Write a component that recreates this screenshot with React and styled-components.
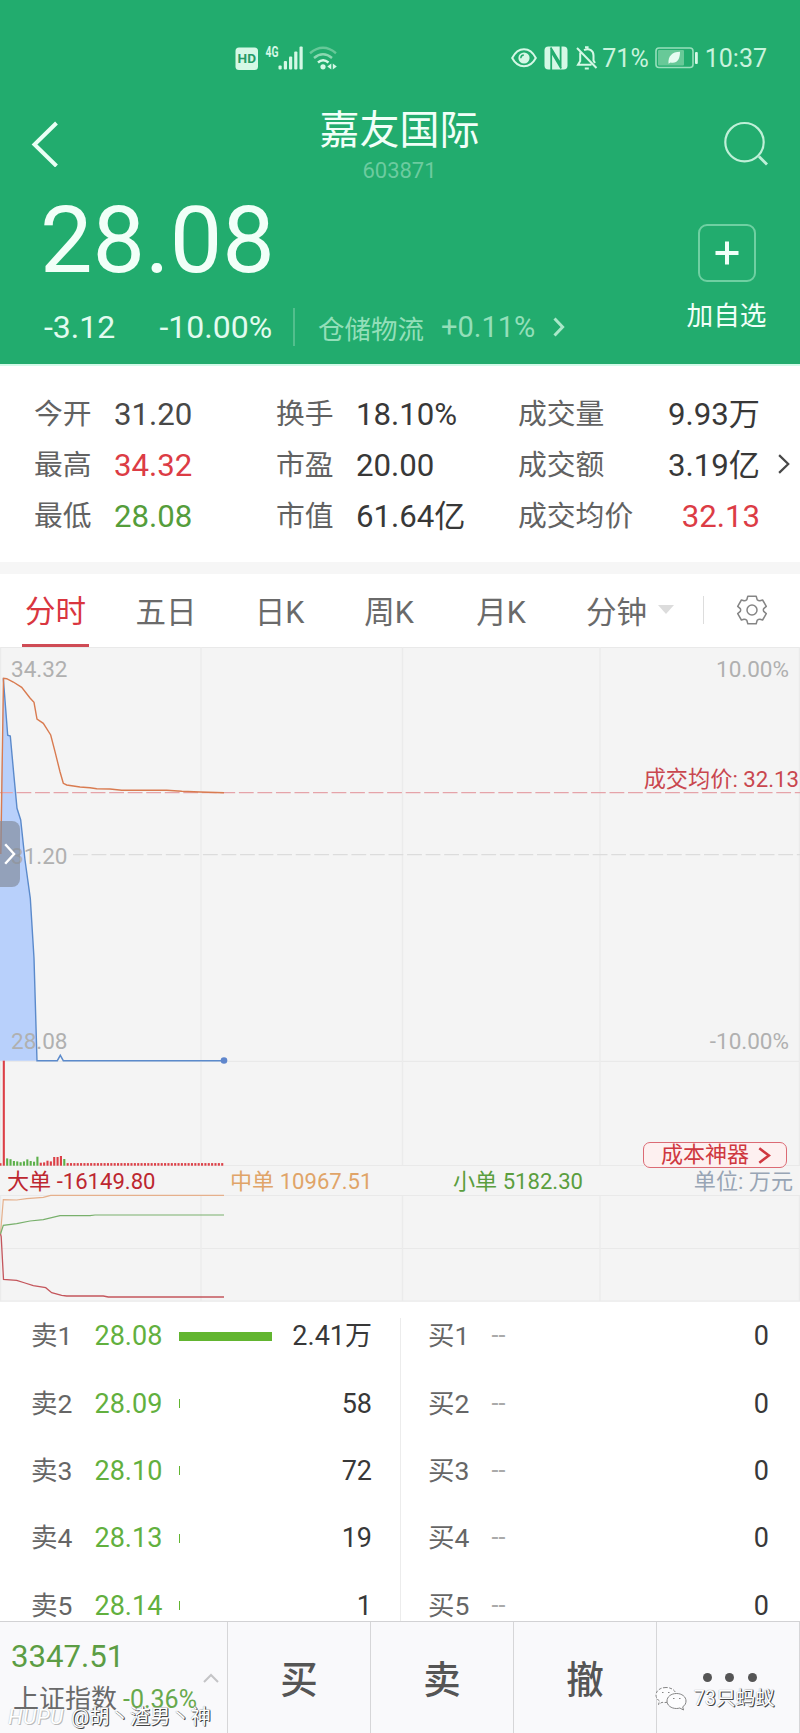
import React from 'react'
import styled, { createGlobalStyle } from 'styled-components'

const GlobalStyle = createGlobalStyle`
  * {
    box-sizing: border-box;
  }
  body {
    margin: 0;
    background-color: #fff;
    font-family: Roboto, "Noto Sans CJK SC", sans-serif;
  }
  svg {
    display: block;
    flex: none;
  }
`

const Page = styled.div`
  width: 800px;
  height: 1733px;
  overflow: hidden;
  display: flex;
  flex-direction: column;
`

/* header */

const Header = styled.header`
  flex: none;
  height: 366px;
  background-color: #22ac6e;
  border-bottom: 2px solid #d3fbe9;
  color: #f1fff8;
`
const StatusBar = styled.div`
  display: flex;
  align-items: center;
  height: 78px;
  padding: 38px 33px 0 235px;
  color: #c9f3dd;
`
const StatusText = styled.span`
  font-size: 25px;
  line-height: 40px;
  margin-left: ${props => props.gap}px;
`
const StatusLabel = styled(StatusText)`
  padding-top: 2px;
`
const StatusRight = styled.div`
  display: flex;
  align-items: center;
  margin-left: auto;
`
const Nav = styled.div`
  display: flex;
  justify-content: space-between;
  height: 110px;
  padding: 27px 32px 0 31px;
`
const NavIcon = styled.div`
  width: 46px;
  padding-top: 16px;
`
const TitleBox = styled.div`
  padding-top: 2px;
  text-align: center;
`
const Title = styled.h1`
  margin: 0;
  font-size: 40px;
  font-weight: normal;
  line-height: 48px;
`
const Code = styled.p`
  margin: 3px 0 0;
  font-size: 22px;
  line-height: 26px;
  color: #6ccb9f;
`
const Quote = styled.div`
  display: flex;
  justify-content: space-between;
  padding: 0 33px 0 40px;
`
const Price = styled.p`
  margin: 2px 0 0;
  font-size: 93.5px;
  line-height: 101px;
`
const ChangeRow = styled.div`
  display: flex;
  align-items: center;
  height: 38px;
  margin-top: 17px;
  padding-left: 4px;
  font-size: 32px;
  color: #e2fbef;
`
const Change = styled.span`
  width: ${props => props.w}px;
`
const Sector = styled.div`
  display: flex;
  align-items: center;
  height: 38px;
  padding-left: 23px;
  border-left: 2px solid #52bf8d;
  font-size: 26.5px;
  color: #93dfb9;
`
const SectorChange = styled.span`
  font-size: 29px;
  margin: 0 18px 0 17px;
`
const Favorite = styled.div`
  display: flex;
  flex-direction: column;
  align-items: center;
  padding: 36px 0 0;
  width: 81px;
  font-size: 26.7px;
  line-height: 32px;
`
const PlusButton = styled.button`
  display: flex;
  align-items: center;
  justify-content: center;
  width: 58px;
  height: 58px;
  margin: 0 0 18px;
  padding: 0;
  border: 2px solid #6fd0a2;
  border-radius: 9px;
  background: none;
`

/* stats */

const Stats = styled.section`
  flex: none;
  display: grid;
  grid-template-columns: 242px 242px 242px 30px;
  grid-template-rows: repeat(3, 51px);
  height: 196px;
  padding: 23px 0 0 34px;
`
const Stat = styled.div`
  display: flex;
  align-items: center;
  justify-content: ${props => (props.spread ? 'space-between' : 'flex-start')};
  line-height: 51px;
`
const StatLabel = styled.span`
  font-size: 28.8px;
  width: ${props => (props.wide ? 'auto' : '80px')};
  color: #626262;
`
const StatValue = styled.span`
  font-size: 31.2px;
  color: ${props => props.color || '#383838'};
`
const StatMore = styled.div`
  grid-column: 4;
  grid-row: 2;
  display: flex;
  align-items: center;
  padding: 0 0 3px 18px;
`

/* tabs */

const Tabs = styled.nav`
  flex: none;
  display: grid;
  grid-template-columns: 111px 110px 117px 102px 122px 141px 1fr;
  height: 85px;
  border-top: 12px solid #f6f6f6;
`
const Tab = styled.div`
  display: flex;
  align-items: center;
  justify-content: center;
  padding-bottom: 2px;
  font-size: 30.5px;
  color: #6a6a6a;
`
const ActiveTab = styled(Tab)`
  width: 67px;
  margin-left: 22px;
  padding-bottom: 0;
  border-bottom: 3px solid #cf4b55;
  color: #d9363f;
`
const MenuTab = styled(Tab)`
  justify-content: space-between;
  padding-left: 24px;
  padding-right: 29px;
`
const Caret = styled.i`
  border: 8.5px solid transparent;
  border-top: 9px solid #dcdcdc;
  border-bottom: 0;
`
const Settings = styled.div`
  display: flex;
  align-items: center;
  height: 28px;
  margin-top: 22px;
  padding-left: 32px;
  border-left: 1px solid #ddd;
`

/* chart */

const Chart = styled.section`
  flex: none;
  position: relative;
  height: 655px;
  background-color: #f4f4f4;
`
const AxisLabel = styled.span`
  position: absolute;
  top: ${props => props.y}px;
  ${props => (props.right ? 'right: 11px;' : 'left: 11px;')}
  font-size: 22.5px;
  line-height: 26px;
  color: #b0b0b0;
`
const AverageLabel = styled(AxisLabel)`
  right: 1px;
  font-size: 22.2px;
  color: #c9474f;
`
const Drawer = styled.div`
  position: absolute;
  left: 0;
  top: 174px;
  display: flex;
  align-items: center;
  width: 20px;
  height: 66px;
  padding-left: 4px;
  border-radius: 0 8px 8px 0;
  background-color: rgba(130, 138, 155, 0.68);
`
const CostButton = styled.div`
  position: absolute;
  left: 643px;
  top: 495px;
  display: flex;
  align-items: center;
  width: 144px;
  height: 26px;
  padding-left: 17px;
  gap: 9px;
  border: 1px solid #dc6a74;
  border-radius: 7px;
  background-color: #fdf0f0;
  font-size: 22px;
  line-height: 26px;
  color: #cf3840;
`
const FlowLegend = styled.div`
  position: absolute;
  left: 0;
  right: 0;
  top: 519px;
  display: grid;
  grid-template-columns: 223px 223px 1fr auto;
  padding: 0 7px;
  font-size: 22.1px;
  line-height: 30px;
`
const Flow = styled.span`
  color: ${props => props.color};
`

/* order book */

const Book = styled.section`
  flex: none;
  display: grid;
  grid-template-columns: 400px 400px;
  height: 319px;
`
const Side = styled.div`
  height: 319px;
  & + & {
    background: linear-gradient(#ececec, #ececec) 0 16px / 1px 303px no-repeat;
    padding-left: 1px;
  }
`
const Level = styled.div`
  display: flex;
  align-items: center;
  height: 67.4px;
  padding: 1px ${props => (props.buy ? 31 : 28)}px 0 ${props => (props.buy ? 27 : 31)}px;
  font-size: 27px;
  line-height: 32px;
  color: #383838;
`
const LevelName = styled.span`
  width: 63.5px;
  font-size: 26.5px;
  color: #666;
`
const LevelPrice = styled.span`
  width: 84.5px;
  color: ${props => (props.empty ? '#aaa' : '#62b03e')};
  font-size: ${props => (props.empty ? 25 : 27)}px;
`
const LevelBar = styled.i`
  height: 9px;
  background-color: #62b530;
`
const LevelAmount = styled.span`
  margin-left: auto;
  font-size: 27px;
`

/* bottom bar */

const BottomBar = styled.footer`
  position: relative;
  flex: none;
  display: grid;
  grid-template-columns: 228px 143px 143px 143px 1fr;
  height: 112px;
  border-top: 1px solid #d2d2d4;
  background-color: #f9f9fb;
`
const IndexBox = styled.div`
  display: flex;
  align-items: flex-start;
  justify-content: space-between;
  padding: 14px 8px 0 11px;
  border-right: 1px solid #d6d6d8;
  svg {
    margin: 37px 0 0 -20px;
  }
`
const IndexValue = styled.p`
  margin: 0;
  font-size: 31.2px;
  line-height: 42px;
  color: #5c9d44;
`
const IndexName = styled.p`
  margin: 0;
  padding-left: 2px;
  font-size: 26px;
  line-height: 42px;
  color: #6a6a6a;
  white-space: nowrap;
`
const IndexChange = styled.span`
  margin-left: 6px;
  font-size: 25px;
  color: #68a94c;
`
const Action = styled.div`
  display: flex;
  align-items: center;
  justify-content: center;
  padding-bottom: 3px;
  border-right: 1px solid #d6d6d8;
  font-size: 37.5px;
  font-weight: 500;
  color: #555;
  &:last-of-type {
    border-right: 0;
  }
`
const Dots = styled.div`
  display: flex;
  gap: 13.5px;
  margin: 0 0 -2px 3px;
`
const Dot = styled.i`
  width: 9px;
  height: 9px;
  border-radius: 50%;
  background-color: #555;
`
const Watermark = styled.div`
  position: absolute;
  left: ${props => props.x}px;
  top: ${props => props.y}px;
  display: flex;
  align-items: center;
  font-size: ${props => props.size}px;
  line-height: 24px;
  white-space: nowrap;
  color: #fff;
  text-shadow: 1px 1px 0 #444, 1px 0 0 #777, 0 0 1px #888;
`
const Brand = styled.em`
  width: 63px;
  font-size: 21px;
  letter-spacing: 0.5px;
  text-shadow: 1px 1px 0 #bbb, 0 0 1px #aaa;
`

const UP = '#dc3c45'
const DOWN = '#559d3b'

const stats = [
  ['今开', '31.20', '#484848'],
  ['换手', '18.10%'],
  ['成交量', '9.93万'],
  ['最高', '34.32', UP],
  ['市盈', '20.00'],
  ['成交额', '3.19亿'],
  ['最低', '28.08', DOWN],
  ['市值', '61.64亿'],
  ['成交均价', '32.13', UP],
]

const sells = [
  ['卖1', '28.08', '2.41万', 93],
  ['卖2', '28.09', '58', 1],
  ['卖3', '28.10', '72', 1],
  ['卖4', '28.13', '19', 1],
  ['卖5', '28.14', '1', 1],
]
const buys = ['买1', '买2', '买3', '买4', '买5']

// first minutes of volume: [height, is up], everything later is flat
const volumes = [
  [2.5, 1], [105, 1], [7.3, 0], [6.5, 0], [4.7, 0], [4.3, 0], [3.5, 0],
  [4.3, 0], [6.3, 0], [4.7, 0], [4, 0], [9, 0], [3, 1], [3.3, 1], [5, 1],
  [4.3, 1], [8.7, 1], [8.7, 1], [9.7, 1], [6.7, 0],
]
for (let i = volumes.length; i < 67; i++) {
  volumes.push([2.6, 1])
}

const priceLine = '3.3,31.3 7.7,88.3 10.3,89 13.7,126.3 17,161.3 20.7,173 25,213 30.3,251.3 34,311.3 37,413.7'
const averageLine = '0.8,207 3.5,31.3 6.7,31.7 13.3,35 21.7,40.3 30,51 34,55.3 37,72 43.3,76.3 50.7,88 55,104.7 60,124.7 63.3,136.3 66.7,138 80,140 90,140.7 96.7,141.7 110,142 121.7,143.3 166.7,143.3 181.7,144.3 200,145 224,145.7'

const Arrow = ({ w, h, stroke, color = 'currentColor' }) => (
  <svg width={w} height={h} fill="none" stroke={color} strokeWidth={stroke}>
    <path d={`M${stroke / 2} ${stroke / 2}L${w - stroke * 0.8} ${h / 2}L${stroke / 2} ${h - stroke / 2}`} />
  </svg>
)

const SignalIcons = () => (
  <svg width="104" height="26" viewBox="0 0 104 26">
    <rect x="0.5" y="2.5" width="22.5" height="22.5" rx="3.5" fill="#d5f8e6" />
    <text x="2.6" y="18.4" fontSize="13.5" fontWeight="bold" fill="#249b66" textLength="18.4" lengthAdjust="spacingAndGlyphs">HD</text>
    <text x="30.5" y="12" fontSize="14.5" fontWeight="bold" fill="#d5f8e6" textLength="13" lengthAdjust="spacingAndGlyphs">4G</text>
    <g fill="#d5f8e6">
      <rect x="43.5" y="20.5" width="3.2" height="4" rx="1" />
      <rect x="48.8" y="16" width="3.2" height="8.5" rx="1" />
      <rect x="54" y="11.5" width="3.2" height="13" rx="1" />
      <rect x="59.2" y="6.5" width="3.2" height="18" rx="1" />
      <rect x="64.5" y="1.5" width="3.2" height="23" rx="1" />
    </g>
    <g fill="none" strokeWidth="2.4">
      <path d="M75 8.2Q88 -2.5 101 8.2" stroke="#66c898" />
      <path d="M79 13Q88 5.5 97 13" stroke="#8bd8b1" />
      <path d="M83 17.5Q88 13 93.5 17.5" stroke="#d5f8e6" />
    </g>
    <circle cx="88" cy="21.8" r="2.6" fill="#d5f8e6" />
    <path d="M96.3 18.5v6l-4-3zM97.8 18.5v6l4-3z" fill="#d5f8e6" />
  </svg>
)

const EyeIcon = () => (
  <svg width="26" height="22" viewBox="0 0 26 22" fill="none" stroke="#d5f8e6" strokeWidth="2">
    <path d="M1.2 11C7-0.7 19-0.7 24.8 11C19 22 7 22 1.2 11z" />
    <circle cx="13" cy="11" r="5.6" fill="#d5f8e6" stroke="none" />
    <path d="M9.8 11.2a3.2 3.2 0 0 1 3-3.2" stroke="#22ac6e" strokeWidth="1.4" />
  </svg>
)

const NfcIcon = () => (
  <svg width="24" height="24" viewBox="0 0 24 24" fill="none">
    <rect x="0.5" y="0.5" width="23" height="23" rx="4" fill="#d5f8e6" />
    <path d="M7.2 24V5.5L17.2 22.5M16.6 0V18L6.6 1.5" stroke="#22ac6e" strokeWidth="1.8" />
  </svg>
)

const BellOffIcon = () => (
  <svg width="22" height="24" viewBox="0 0 22 24" fill="none" stroke="#d5f8e6" strokeWidth="2">
    <path d="M4.2 6.5V15L2 18.8H15.5M8 4.2C13.5 1.6 17.5 5 17.5 9.5V14.5L19 17M1 2L20.5 22M9 1.2h3.6M8.8 22.6h4" />
  </svg>
)

const BatteryIcon = () => (
  <svg width="44" height="22" viewBox="0 0 44 22">
    <rect x="1" y="1" width="37" height="19.5" rx="3" fill="none" stroke="#98dfbc" strokeWidth="1.6" />
    <rect x="3" y="3" width="26" height="15.5" rx="1" fill="#68c998" />
    <path d="M13.5 16.8C13 9 17 5 25 4.8C25 12.5 22 17 15.5 15.5z" fill="#e6fcf1" />
    <rect x="40" y="5" width="2.8" height="12" rx="1" fill="#d5f8e6" />
  </svg>
)

const GearIcon = () => (
  <svg width="32" height="32" viewBox="-16 -16 32 32" fill="none" stroke="#858585" strokeWidth="1.5" strokeLinejoin="round">
    <path d="M-4.2 -13.7H4.2L5.2 -10.2Q6.3 -9.1 8 -9.2L10.6 -10L14.3 -3.6L11.7 -1.4Q11 0 11.7 1.4L14.3 3.6L10.6 10L8 9.2Q6.3 9.1 5.2 10.2L4.2 13.7H-4.2L-5.2 10.2Q-6.3 9.1 -8 9.2L-10.6 10L-14.3 3.6L-11.7 1.4Q-11 0 -11.7 -1.4L-14.3 -3.6L-10.6 -10L-8 -9.2Q-6.3 -9.1 -5.2 -10.2z" />
    <circle r="5" />
  </svg>
)

const ChatIcon = () => (
  <svg width="34" height="26" viewBox="0 0 34 26" fill="#fdfdfe" stroke="#777" strokeWidth="0.9">
    <path d="M11 1.5C5 1.5 1 5 1 9c0 2.500 1.300 4.600 3.500 6L3.500 18.500L7 16.300c4.500 1 14-1 14-7.300C21 5 17 1.500 11 1.500z" strokeDasharray="3 1.5" />
    <path d="M21.500 7.500c-5.500 0-9.500 3.300-9.500 7.500s4 7.500 9.500 7.500c1.200 0 2.300-.2 3.300-.5L28.500 24l-.8-3.200C30 19.500 31 17.300 31 15c0-4.200-4-7.500-9.500-7.500z" />
    <path d="M7 6.500h1.500M13 6.500h1.500M18 12.500h1.500M24 12.500h1.500" />
  </svg>
)

const ChartCanvas = () => (
  <svg width="800" height="655" fill="none">
    <path d="M0 0.5H800M0 414.3H800M0 518.5H800M0 548.5H800M0 601.5H800M0 654H800" stroke="#e9e9e9" strokeWidth="1.2" />
    <path d="M0.5 0V518M201 0V518M402.5 0V518M600 0V518M799.5 0V518M0.5 549V654M201 549V654M402.5 549V654M600 549V654M799.5 549V654" stroke="#ebebeb" strokeWidth="1.5" />
    <polygon points={`0,207 ${priceLine} 0,413.7`} fill="#b8d0fb" />
    <path d="M0 145.7H800" stroke="#e5a3a9" strokeWidth="1.3" strokeDasharray="14.8 3.73" strokeDashoffset="2" />
    <path d="M73 207.7H800" stroke="#dcdcdc" strokeWidth="1.3" strokeDasharray="14.8 3.76" />
    <polyline points={`${priceLine} 57.3,413.7 60.3,408.3 63.3,413.7 224,413.7`} stroke="#5b8acb" strokeWidth="1.4" />
    <polyline points={averageLine} stroke="#d97b50" strokeWidth="1.4" />
    <circle cx="224" cy="413.5" r="3.3" fill="#5f86cc" />
    {volumes.map(([h, up], i) => (
      <rect key={i} x={i * 3.36 - 0.6} y={518.7 - h} width="2.1" height={h} fill={up ? '#dc3f46' : '#5cb04a'} />
    ))}
    <polyline points="0.5,587 3.3,552.7 16.7,553 26.7,551.7 43.3,550.3 50.7,548.3 224,548.3" stroke="#e5b08c" strokeWidth="1.2" />
    <polyline points="0.5,587 3.3,578.3 16.7,576.7 30,574 43.3,572.7 60,568.7 90,568.7 95,568 224,568" stroke="#78b06c" strokeWidth="1.2" />
    <polyline points="0.5,587 1.2,589.7 3.5,632.3 16.7,633.3 25,636 33.3,638.7 45.7,640.7 51.7,645.7 61.7,648.3 66.7,649 103.3,649 108.3,650 224,650" stroke="#c4565c" strokeWidth="1.3" />
  </svg>
)

const App = () => {
  return (
    <Page>
      <GlobalStyle />
      <Header>
        <StatusBar>
          <SignalIcons />
          <StatusRight>
            <EyeIcon />
            <StatusText gap={7}><NfcIcon /></StatusText>
            <StatusText gap={8}><BellOffIcon /></StatusText>
            <StatusLabel gap={4}>71%</StatusLabel>
            <StatusText gap={6}><BatteryIcon /></StatusText>
            <StatusLabel gap={6}>10:37</StatusLabel>
          </StatusRight>
        </StatusBar>
        <Nav>
          <NavIcon>
            <svg width="28" height="46" fill="none" stroke="#e9fff5" strokeWidth="4">
              <path d="M25.5 2L3.5 23.5L25.5 45" />
            </svg>
          </NavIcon>
          <TitleBox>
            <Title>嘉友国际</Title>
            <Code>603871</Code>
          </TitleBox>
          <NavIcon>
            <svg width="46" height="46" fill="none" stroke="#bff0d8" strokeWidth="2.2">
              <circle cx="22.5" cy="21.2" r="19.2" />
              <path d="M37 35.5L45 43.5" strokeWidth="2.8" />
            </svg>
          </NavIcon>
        </Nav>
        <Quote>
          <div>
            <Price>28.08</Price>
            <ChangeRow>
              <Change w={115.5}>-3.12</Change>
              <Change w={133.5}>-10.00%</Change>
              <Sector>
                仓储物流
                <SectorChange>+0.11%</SectorChange>
                <Arrow w={12} h={20} stroke={3} color="#a9e8c9" />
              </Sector>
            </ChangeRow>
          </div>
          <Favorite>
            <PlusButton>
              <svg width="24" height="24" stroke="#f1fff8" strokeWidth="4">
                <path d="M12 0.5V23.5M0.5 12H23.5" />
              </svg>
            </PlusButton>
            加自选
          </Favorite>
        </Quote>
      </Header>

      <Stats>
        {stats.map(([label, value, color], i) => (
          <Stat key={label} spread={i % 3 === 2 ? 1 : undefined}  style={{ gridColumn: (i % 3) + 1 }}>
            <StatLabel wide={i % 3 === 2 ? 1 : undefined}>{label}</StatLabel>
            <StatValue color={color}>{value}</StatValue>
          </Stat>
        ))}
        <StatMore><Arrow w={12} h={20} stroke={2.2} color="#484848" /></StatMore>
      </Stats>

      <Tabs>
        <ActiveTab>分时</ActiveTab>
        <Tab>五日</Tab>
        <Tab>日K</Tab>
        <Tab>周K</Tab>
        <Tab>月K</Tab>
        <MenuTab>分钟<Caret /></MenuTab>
        <Settings><GearIcon /></Settings>
      </Tabs>

      <Chart>
        <ChartCanvas />
        <AxisLabel y={9}>34.32</AxisLabel>
        <AxisLabel y={9} right="1">10.00%</AxisLabel>
        <AxisLabel y={196}>31.20</AxisLabel>
        <AxisLabel y={381}>28.08</AxisLabel>
        <AxisLabel y={381} right="1">-10.00%</AxisLabel>
        <AverageLabel y={119} right="1">成交均价: 32.13</AverageLabel>
        <Drawer><Arrow w={12} h={22} stroke={2.4} color="#fff" /></Drawer>
        <FlowLegend>
          <Flow color="#bd2730">大单 -16149.80</Flow>
          <Flow color="#e0a468">中单 10967.51</Flow>
          <Flow color="#5b9e3e">小单 5182.30</Flow>
          <Flow color="#98a5b5">单位: 万元</Flow>
        </FlowLegend>
        <CostButton>成本神器<Arrow w={13} h={17} stroke={2.6} /></CostButton>
      </Chart>

      <Book>
        <Side>
          {sells.map(([name, price, amount, width]) => (
            <Level key={name}>
              <LevelName>{name}</LevelName>
              <LevelPrice>{price}</LevelPrice>
              <LevelBar style={{ width }} />
              <LevelAmount>{amount}</LevelAmount>
            </Level>
          ))}
        </Side>
        <Side>
          {buys.map(name => (
            <Level key={name} buy="1">
              <LevelName>{name}</LevelName>
              <LevelPrice empty="1">--</LevelPrice>
              <LevelAmount>0</LevelAmount>
            </Level>
          ))}
        </Side>
      </Book>

      <BottomBar>
        <IndexBox>
          <div>
            <IndexValue>3347.51</IndexValue>
            <IndexName>上证指数<IndexChange>-0.36%</IndexChange></IndexName>
          </div>
          <svg width="16" height="10" fill="none" stroke="#c4c4c6" strokeWidth="2">
            <path d="M1 9L8 2L15 9" />
          </svg>
        </IndexBox>
        <Action>买</Action>
        <Action>卖</Action>
        <Action>撤</Action>
        <Action>
          <Dots><Dot /><Dot /><Dot /></Dots>
        </Action>
        <Watermark x={8} y={83} size={20.3}><Brand>HUPU</Brand>@胡丶渣男丶神</Watermark>
        <Watermark x={655} y={64} size={19.6}><ChatIcon />&nbsp;73只蚂蚁</Watermark>
      </BottomBar>
    </Page>
  );
}

export default App
